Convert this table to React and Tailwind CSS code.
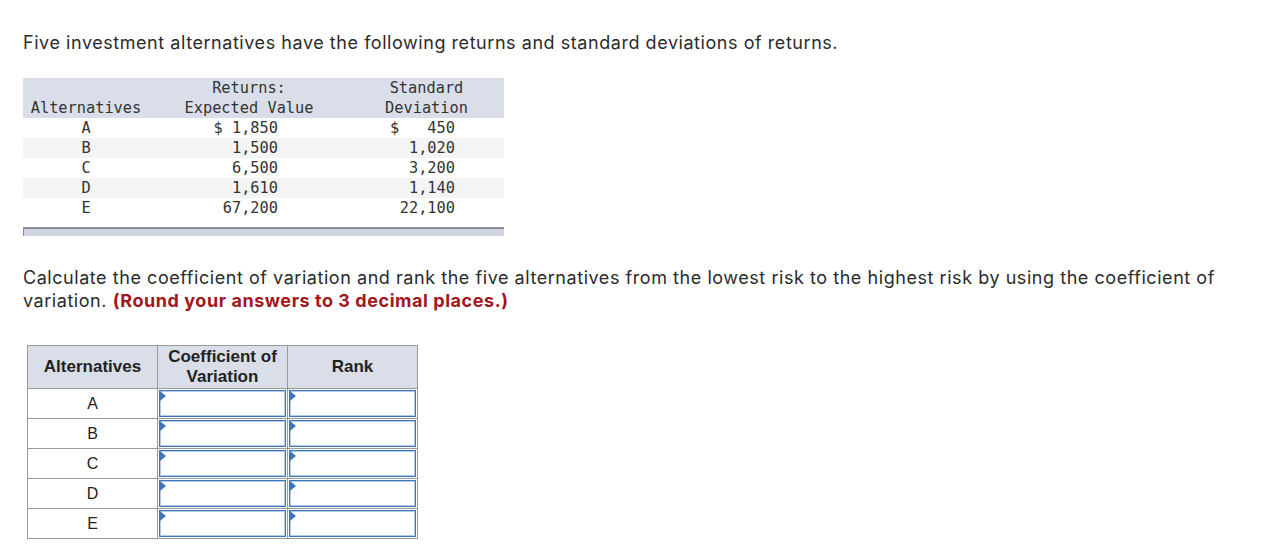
export default function App() {
  const data = [
    ["A", "$ 1,850", "450", true],
    ["B", "1,500", "1,020", false],
    ["C", "6,500", "3,200", false],
    ["D", "1,610", "1,140", false],
    ["E", "67,200", "22,100", false],
  ];
  const mono = { fontFamily: '"DejaVu Sans Mono", "Liberation Mono", monospace' };
  const body = { fontFamily: 'Inter, "Open Sans", sans-serif' };
  const arial = { fontFamily: '"Liberation Sans", Arial, sans-serif' };
  return (
    <div className="w-[1266px] h-[556px] bg-white text-[#222] overflow-hidden pl-[23px] pt-[31px]">
      <p style={body} className="text-[18px] leading-[23px] tracking-[0.55px] text-[#2b2b2b]">
        Five investment alternatives have the following returns and standard deviations of returns.
      </p>

      <div style={mono} className="mt-[24px] w-[481px] text-[15.3px] leading-[20px] text-[#333]">
        <div className="flex bg-[#dadee8] h-[40px]">
          <div className="w-[126px] flex items-end justify-center">Alternatives</div>
          <div className="w-[200px] flex flex-col items-center">
            <span>Returns:</span>
            <span>Expected Value</span>
          </div>
          <div className="w-[155px] flex flex-col items-center">
            <span>Standard</span>
            <span>Deviation</span>
          </div>
        </div>
        {data.map(([a, r, s, dollar], i) => (
          <div key={a} className={`flex h-[20px] ${i % 2 === 1 ? "bg-[#f4f4f4]" : "bg-white"}`}>
            <div className="w-[126px] text-center">{a}</div>
            <div className="w-[200px] text-right pr-[71px]">{r}</div>
            <div className="w-[155px] flex justify-between pl-[41px] pr-[49px]">
              <span>{dollar ? "$" : ""}</span>
              <span>{s}</span>
            </div>
          </div>
        ))}
        <div className="mt-[9px] h-[9px] bg-[#ced4df] border-t-2 border-l border-[#8c9099]"></div>
      </div>

      <p style={body} className="mt-[30px] w-[1225px] text-[18px] leading-[23px] tracking-[0.55px] text-[#2b2b2b]">
        Calculate the coefficient of variation and rank the five alternatives from the lowest risk to the highest risk by using the coefficient of variation.{" "}
        <span className="font-bold text-[#a3161c]">(Round your answers to 3 decimal places.)</span>
      </p>

      <div style={arial} className="mt-[33px] ml-[4px] w-[391px] border border-[#9a9a9a] text-[16px] text-[#222]">
        <div className="grid grid-cols-[130px_130px_129px] h-[42px] bg-[#dadee8] font-bold text-[17px] leading-[20px]">
          <div className="flex items-center justify-center border-r border-[#9a9a9a]">Alternatives</div>
          <div className="flex items-center justify-center text-center border-r border-[#9a9a9a]">Coefficient of<br />Variation</div>
          <div className="flex items-center justify-center">Rank</div>
        </div>
        {data.map(([a]) => (
          <div key={a} className="grid grid-cols-[130px_130px_129px] h-[30px] border-t border-[#9a9a9a]">
            <div className="flex items-center justify-center border-r border-[#9a9a9a]">{a}</div>
            {[0, 1].map((k) => (
              <div key={k} className={`p-[1px] ${k === 0 ? "border-r border-[#9a9a9a]" : ""}`}>
                <div className="relative h-full border border-[#3f75b8] shadow-[inset_0_0_0_1px_#b3cbe9] bg-white">
                  <div className="absolute left-[0px] top-[0px] w-0 h-0 border-t-[5px] border-b-[5px] border-l-[6px] border-t-transparent border-b-transparent border-l-[#3f75b8]"></div>
                </div>
              </div>
            ))}
          </div>
        ))}
      </div>
    </div>
  );
}
